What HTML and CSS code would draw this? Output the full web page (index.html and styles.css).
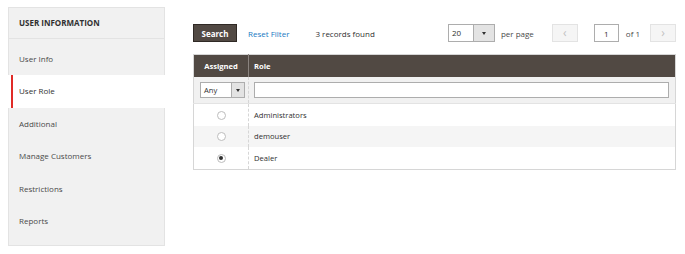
FILE: index.html
```html
<!DOCTYPE html>
<html lang="en">
<head>
    <meta charset="UTF-8">
    <meta name="viewport" content="width=device-width, initial-scale=1.0">
    <title>User Role</title>
    <link rel="stylesheet" href="styles.css">
</head>
<body>
    <div class="page">
        <aside class="tabs">
            <div class="tabs-title">User Information</div>
            <ul class="tabs-list">
                <li>User Info</li>
                <li class="active">User Role</li>
                <li>Additional</li>
                <li>Manage Customers</li>
                <li>Restrictions</li>
                <li>Reports</li>
            </ul>
        </aside>

        <main class="grid-area">
            <div class="toolbar">
                <button class="btn-search" type="button">Search</button>
                <a class="reset-link" href="#">Reset Filter</a>
                <span class="records">3 records found</span>

                <div class="pager">
                    <div class="select per-page">
                        <span class="select-value">20</span>
                        <span class="select-arrow"></span>
                    </div>
                    <span class="pager-label">per page</span>
                    <button class="pager-btn prev" type="button">&lsaquo;</button>
                    <input class="page-input" type="text" value="1">
                    <span class="pager-of">of 1</span>
                    <button class="pager-btn next" type="button">&rsaquo;</button>
                </div>
            </div>

            <table class="data-grid">
                <thead>
                    <tr>
                        <th class="col-assigned">Assigned</th>
                        <th class="col-role">Role</th>
                    </tr>
                    <tr class="filters">
                        <td class="col-assigned">
                            <div class="select filter-select">
                                <span class="select-value">Any</span>
                                <span class="select-arrow"></span>
                            </div>
                        </td>
                        <td class="col-role"><input class="filter-input" type="text"></td>
                    </tr>
                </thead>
                <tbody>
                    <tr>
                        <td class="col-assigned"><span class="radio"></span></td>
                        <td class="col-role">Administrators</td>
                    </tr>
                    <tr class="odd">
                        <td class="col-assigned"><span class="radio"></span></td>
                        <td class="col-role">demouser</td>
                    </tr>
                    <tr>
                        <td class="col-assigned"><span class="radio checked"></span></td>
                        <td class="col-role">Dealer</td>
                    </tr>
                </tbody>
            </table>
        </main>
    </div>
</body>
</html>
```

FILE: styles.css
```css
body {
    margin: 0;
    background-color: #fff;
    font-family: 'Open Sans', 'Liberation Sans', sans-serif;
    font-size: 8px;
    color: #303030;
}

.page {
    display: flex;
    align-items: flex-start;
    gap: 28px;
    padding: 7px 0 0 8px;
}

/* sidebar tabs */
.tabs {
    width: 157px;
    box-sizing: border-box;
    background-color: #f1f1f1;
    border: 1px solid #e3e3e3;
}

.tabs-title {
    height: 30px;
    line-height: 29px;
    padding-left: 10px;
    font-weight: 700;
    text-transform: uppercase;
    color: #303030;
    border-bottom: 1px solid #e3e3e3;
}

.tabs-list {
    list-style: none;
    margin: 0;
    padding: 4px 0 8px;
}

.tabs-list li {
    height: 32.4px;
    line-height: 32.4px;
    padding-left: 10px;
    color: #4a4a4a;
}

.tabs-list li.active {
    background: linear-gradient(to right, #fff 3px, #e02b27 3px, #e02b27 5px, #fff 5px);
    color: #303030;
    margin-left: -1px;
    margin-right: -1px;
    padding-left: 11px;
}

/* grid */
.grid-area {
    width: 483px;
    padding-top: 17px;
}

.toolbar {
    display: flex;
    align-items: center;
    height: 18px;
    margin-bottom: 12px;
}

.btn-search {
    height: 18px;
    width: 44px;
    padding: 0;
    border: 1px solid #2f2925;
    background-color: #514943;
    color: #fff;
    font-family: inherit;
    font-size: 8px;
    font-weight: 700;
}

.reset-link {
    margin-left: 11px;
    color: #1979c3;
    text-decoration: none;
}

.records {
    margin-left: 26px;
}

.pager {
    display: flex;
    align-items: center;
    margin-left: auto;
}

.select {
    display: flex;
    box-sizing: border-box;
    border: 1px solid #adadad;
    background-color: #fff;
}

.select-value {
    flex: 1;
    padding-left: 3px;
}

.select-arrow {
    position: relative;
    background-color: #e3e3e3;
    border-left: 1px solid #adadad;
}

.select-arrow::after {
    content: '';
    position: absolute;
    left: 50%;
    top: 50%;
    margin: -1px 0 0 -2px;
    border-left: 2px solid transparent;
    border-right: 2px solid transparent;
    border-top: 3px solid #303030;
}

.per-page {
    width: 47px;
    height: 18px;
    line-height: 16px;
}

.per-page .select-arrow {
    width: 20px;
}

.pager-label {
    margin-left: 6px;
    color: #4a4a4a;
}

.pager-btn {
    width: 26px;
    height: 18px;
    padding: 0;
    box-sizing: border-box;
    border: 1px solid #e3e3e3;
    background-color: #f5f5f5;
    color: #c2c2c2;
    font-family: inherit;
    font-size: 12px;
    line-height: 14px;
}

.prev {
    margin-left: 18px;
}

.page-input {
    width: 25px;
    height: 18px;
    margin-left: 16px;
    box-sizing: border-box;
    border: 1px solid #adadad;
    padding: 0;
    text-align: center;
    font-family: inherit;
    font-size: 8px;
    color: #303030;
}

.pager-of {
    margin-left: 7px;
    color: #4a4a4a;
}

.next {
    margin-left: 10px;
}

.data-grid {
    width: 100%;
    border-collapse: collapse;
    font-size: 7.6px;
    border: 1px solid #d6d6d6;
}

.data-grid th {
    height: 22px;
    padding: 0;
    background-color: #514943;
    color: #fff;
    font-weight: 700;
    text-align: left;
}

.data-grid th.col-assigned {
    text-align: center;
    border-right: 1px solid #8a837f;
}

.data-grid .col-assigned {
    width: 54px;
}

.data-grid .col-role {
    padding-left: 5px;
}

.data-grid td {
    height: 21.5px;
    padding: 0;
}

.data-grid tbody td.col-assigned {
    text-align: center;
    border-right: 1px dashed #d6d6d6;
}

.filters td {
    height: 26px;
    background-color: #f1f1f1;
    border-bottom: 1px solid #e3e3e3;
}

.filters td.col-assigned {
    border-right: 1px dashed #d6d6d6;
}

.filters td.col-role {
    padding-right: 6px;
}

.filter-select {
    width: 45px;
    height: 16px;
    line-height: 14px;
    margin-left: 6px;
    text-align: left;
}

.filter-select .select-arrow {
    width: 12px;
}

.filter-input {
    display: block;
    width: 100%;
    height: 16px;
    box-sizing: border-box;
    border: 1px solid #adadad;
    margin: 0;
}

.data-grid tr.odd td {
    background-color: #f5f5f5;
}

.radio {
    display: inline-block;
    width: 9px;
    height: 9px;
    box-sizing: border-box;
    border: 1px solid #bdbdbd;
    border-radius: 50%;
    background-color: #fff;
    vertical-align: middle;
    position: relative;
}

.radio.checked::after {
    content: '';
    position: absolute;
    left: 1.5px;
    top: 1.5px;
    width: 4px;
    height: 4px;
    border-radius: 50%;
    background-color: #303030;
}
```
